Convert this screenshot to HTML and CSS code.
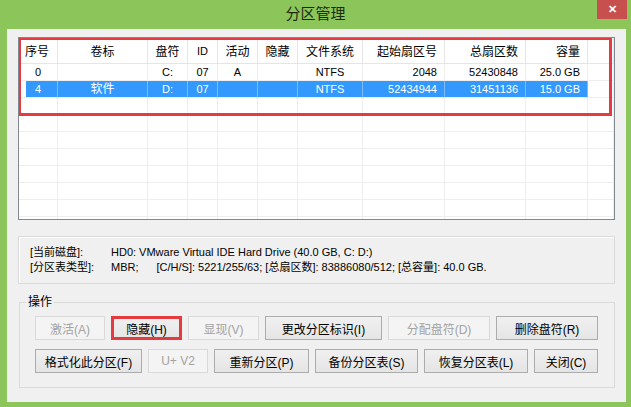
FILE: index.html
```html
<!DOCTYPE html>
<html lang="zh-CN">
<head>
    <meta charset="UTF-8">
    <title>分区管理</title>
    <link rel="stylesheet" href="styles.css">
</head>
<body>
    <div class="titlebar">
        <span></span>
        <span class="title">分区管理</span>
        <span class="close">&#x2715;</span>
    </div>

    <div class="client">
        <div class="listview">
            <table>
                <colgroup>
                    <col style="width:39px"><col style="width:90px"><col style="width:40px"><col style="width:30px">
                    <col style="width:40px"><col style="width:40px"><col style="width:65px"><col style="width:82px">
                    <col style="width:81px"><col style="width:62px"><col style="width:26px">
                </colgroup>
                <thead>
                    <tr>
                        <th class="first">序号</th><th>卷标</th><th>盘符</th><th class="n">ID</th><th>活动</th><th>隐藏</th>
                        <th>文件系统</th><th class="r">起始扇区号</th><th class="r">总扇区数</th><th class="r">容量</th><th></th>
                    </tr>
                </thead>
                <tbody>
                    <tr>
                        <td class="n">0</td><td></td><td class="n">C:</td><td class="n">07</td><td class="n">A</td><td></td>
                        <td class="n">NTFS</td><td class="n r">2048</td><td class="n r">52430848</td><td class="n r">25.0 GB</td><td></td>
                    </tr>
                    <tr class="sel">
                        <td class="n">4</td><td>软件</td><td class="n">D:</td><td class="n">07</td><td></td><td></td>
                        <td class="n">NTFS</td><td class="n r">52434944</td><td class="n r">31451136</td><td class="n r">15.0 GB</td><td class="none"></td>
                    </tr>
                    <tr><td></td><td></td><td></td><td></td><td></td><td></td><td></td><td></td><td></td><td></td><td></td></tr>
                    <tr><td></td><td></td><td></td><td></td><td></td><td></td><td></td><td></td><td></td><td></td><td></td></tr>
                    <tr><td></td><td></td><td></td><td></td><td></td><td></td><td></td><td></td><td></td><td></td><td></td></tr>
                    <tr><td></td><td></td><td></td><td></td><td></td><td></td><td></td><td></td><td></td><td></td><td></td></tr>
                    <tr><td></td><td></td><td></td><td></td><td></td><td></td><td></td><td></td><td></td><td></td><td></td></tr>
                    <tr><td></td><td></td><td></td><td></td><td></td><td></td><td></td><td></td><td></td><td></td><td></td></tr>
                    <tr><td></td><td></td><td></td><td></td><td></td><td></td><td></td><td></td><td></td><td></td><td></td></tr>
                    <tr><td></td><td></td><td></td><td></td><td></td><td></td><td></td><td></td><td></td><td></td><td></td></tr>
                </tbody>
            </table>
            <div class="mark-list"></div>
        </div>

        <div class="info">
            <div class="line"><span class="label">[当前磁盘]:</span><span>HD0: VMware Virtual IDE Hard Drive (40.0 GB, C: D:)</span></div>
            <div class="line"><span class="label">[分区表类型]:</span><span>MBR;</span><span class="geo">[C/H/S]: 5221/255/63; [总扇区数]: 83886080/512; [总容量]: 40.0 GB.</span></div>
        </div>

        <fieldset class="ops">
            <legend>操作</legend>
            <div class="row">
                <button class="w70" disabled>激活(A)</button>
                <button class="w71 mark">隐藏(H)</button>
                <button class="w71" disabled>显现(V)</button>
                <button class="w117">更改分区标识(I)</button>
                <button class="w102" disabled>分配盘符(D)</button>
                <button class="w102">删除盘符(R)</button>
            </div>
            <div class="row">
                <button class="w107">格式化此分区(F)</button>
                <button class="w60" disabled>U+ V2</button>
                <button class="w95">重新分区(P)</button>
                <button class="w103">备份分区表(S)</button>
                <button class="w104">恢复分区表(L)</button>
                <button class="w64">关闭(C)</button>
            </div>
        </fieldset>
    </div>
</body>
</html>
```

FILE: styles.css
```css
body {
    margin: 0;
    width: 631px;
    height: 407px;
    overflow: hidden;
    background-color: #8cc65b;
    font-family: "Liberation Sans", "Noto Sans CJK SC", sans-serif;
    font-size: 12px;
    color: #000;
}
.titlebar {
    height: 29px;
    display: grid;
    grid-template-columns: 1fr auto 1fr;
}
.title {
    font-family: "Noto Sans CJK SC", sans-serif;
    font-size: 15px;
    line-height: 26px;
    color: #1d2a12;
}
.close {
    justify-self: end;
    width: 30px;
    height: 19px;
    margin-right: 4px;
    background-color: #c7504f;
    color: #fff;
    font-size: 11px;
    font-weight: bold;
    line-height: 19px;
    text-align: center;
}
.client {
    margin: 0 5px 0 7px;
    height: 373px;
    box-sizing: border-box;
    padding: 8px 11px 0 11px;
    background-color: #f0f0f0;
}
.listview {
    position: relative;
    height: 183px;
    box-sizing: border-box;
    border: 1px solid #828790;
    background-color: #fff;
    overflow: hidden;
}
table {
    table-layout: fixed;
    width: 595px;
    border-collapse: separate;
    border-spacing: 0;
}
th, td {
    padding: 0;
    border-right: 1px solid #eeeeee;
    border-bottom: 1px solid #eeeeee;
    text-align: center;
    white-space: nowrap;
    overflow: hidden;
}
th {
    height: 25px;
    font-weight: normal;
    border-right-color: #e5e5e5;
    border-bottom-color: #e5e5e5;
}
th.first {
    text-align: left;
    padding-left: 6px;
}
td {
    height: 16px;
    line-height: 16px;
}
.n {
    font-size: 11px;
}
.r {
    text-align: right;
    padding-right: 7px;
}
.sel td {
    background-color: #3399ff;
    color: #fff;
    border-right-color: #7dbcf7;
    border-bottom-color: #eeeeee;
}
.sel td:first-child {
    background: linear-gradient(to right, #fff 0, #fff 7px, #3399ff 7px);
}
.sel td.none {
    background-color: #fff;
    border-right-color: #eeeeee;
}
.mark-list {
    position: absolute;
    left: -1px;
    top: -1px;
    width: 594px;
    height: 79px;
    box-sizing: border-box;
    border: 3px solid #e43a40;
}
.info {
    margin-top: 16px;
    height: 48px;
    box-sizing: border-box;
    padding: 8px 11px;
    border: 1px solid #dadada;
    box-shadow: inset 1px 1px 0 #fff;
    font-size: 11px;
    line-height: 15px;
}
.line {
    display: flex;
    white-space: nowrap;
}
.label {
    width: 81px;
}
.geo {
    margin-left: 18px;
}
.ops {
    margin: 10px 0 0 1px;
    padding: 0 0 14px 6px;
    border: 1px solid #dadada;
}
.ops legend {
    padding: 0 2px;
    line-height: 16px;
}
.row {
    display: flex;
    gap: 6px;
    margin: 6px 0 0 9px;
}
.row + .row {
    margin-top: 9px;
}
button {
    height: 24px;
    padding: 0;
    font-family: "Liberation Sans", "Noto Sans CJK SC", sans-serif;
    font-size: 12px;
    color: #000;
    border: 1px solid #acacac;
    background: linear-gradient(#f0f0f0, #e5e5e5);
}
button:disabled {
    color: #a3a3a3;
    border-color: #d9d9d9;
    background: #f4f4f4;
}
.mark {
    outline: 3px solid #e43a40;
    outline-offset: -3px;
}
.w60 { width: 60px; }
.w64 { width: 64px; }
.w70 { width: 70px; }
.w71 { width: 71px; }
.w95 { width: 95px; }
.w102 { width: 102px; }
.w103 { width: 103px; }
.w104 { width: 104px; }
.w107 { width: 107px; }
.w117 { width: 117px; }
```
